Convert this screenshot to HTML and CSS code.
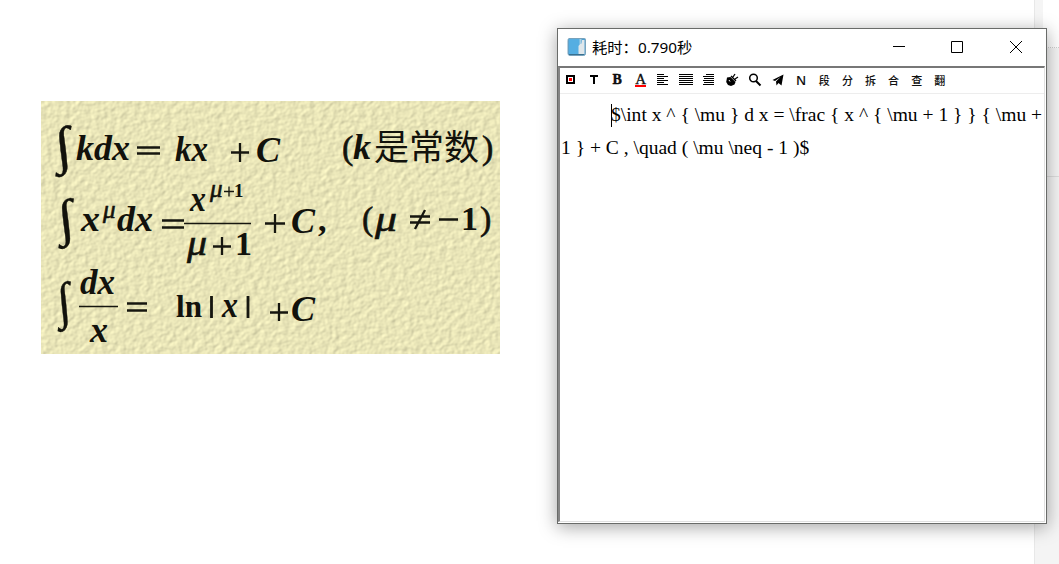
FILE: index.html
```html
<!DOCTYPE html>
<html lang="zh">
<head>
<meta charset="utf-8">
<title>耗时</title>
<link rel="stylesheet" href="styles.css">
</head>
<body>
<main class="desktop">
  <div class="side"><div class="side-top"></div><div class="side-mid"></div><div class="side-low"></div></div>

  <svg class="formula" viewBox="41 101 459 253">
    <defs>
      <filter id="paper" x="0" y="0" width="100%" height="100%" color-interpolation-filters="sRGB">
        <feTurbulence type="fractalNoise" baseFrequency="0.16 0.18" numOctaves="2" seed="8"/>
        <feColorMatrix values="0 0 0 0 0  0 0 0 0 0  0 0 0 0 0  1 0 0 0 0" result="h"/>
        <feDiffuseLighting in="h" surfaceScale="0.55" diffuseConstant="1.14" lighting-color="#ece8ba">
          <feDistantLight azimuth="215" elevation="60"/>
        </feDiffuseLighting>
      </filter>
    </defs>
    <rect class="paper" x="41" y="101" width="459" height="253" filter="url(#paper)"/>
    <g class="integral">
      <text transform="translate(57 163) skewX(7) scale(1.45 1.32)">∫</text>
      <text transform="translate(60 235) skewX(7) scale(1.4 1.3)">∫</text>
      <text transform="translate(59 318) skewX(6) scale(1.2 1.3)">∫</text>
    </g>
    <g class="var">
      <text x="76" y="160" textLength="54" lengthAdjust="spacingAndGlyphs">kdx</text>
      <text x="175" y="161" textLength="33" lengthAdjust="spacingAndGlyphs">kx</text>
      <text x="256" y="162">C</text>
      <text x="353" y="159">k</text>
      <text x="81" y="231" textLength="19" lengthAdjust="spacingAndGlyphs">x</text>
      <text class="mu small" x="103" y="218">μ</text>
      <text x="117" y="231" textLength="36" lengthAdjust="spacingAndGlyphs">dx</text>
      <text x="190" y="211" textLength="16" lengthAdjust="spacingAndGlyphs">x</text>
      <text class="mu small" x="210" y="197">μ</text>
      <text class="mu" x="187" y="255" textLength="20" lengthAdjust="spacingAndGlyphs">μ</text>
      <text x="291" y="233">C</text>
      <text class="mu" x="375" y="231" textLength="22" lengthAdjust="spacingAndGlyphs">μ</text>
      <text x="80" y="294" textLength="35" lengthAdjust="spacingAndGlyphs">dx</text>
      <text x="90" y="342">x</text>
      <text x="222" y="317" textLength="16" lengthAdjust="spacingAndGlyphs">x</text>
      <text x="291" y="321">C</text>
    </g>
    <g class="num">
      <text class="paren" x="342" y="159">(</text>
      <text class="paren" x="482" y="159">)</text>
      <text class="tiny" x="234" y="197">1</text>
      <text x="235" y="255">1</text>
      <text x="318" y="231">,</text>
      <text class="paren" x="362" y="230">(</text>
      <text x="461" y="230">1</text>
      <text class="paren" x="480" y="230">)</text>
      <text class="ln" x="176" y="317" textLength="26" lengthAdjust="spacingAndGlyphs">ln</text>
    </g>
    <text class="cjk" x="374" y="160">是常数</text>
    <g class="ops">
      <path d="M137 147.500h23M137 153.500h23M231 152.500h18M240 143v19"/>
      <path d="M162 220.500h22M162 227.500h22M265 223.500h20M275 214v19M213 246.500h18M222 237v18M410 216.500h20M410 222.500h20M425 210l-10 19M439 219.500h19"/>
      <path d="M127 303.500h20M127 310.500h20M270 312.500h18M279 303v18"/>
      <path class="bar" d="M211.500 296v22M248 296v22"/>
      <path class="fine" d="M224 191.500h10M229 186.500v10M184 223.500h67M79 306.500h39"/>
    </g>
  </svg>

  <section class="window">
    <header class="titlebar">
      <svg class="app" viewBox="0 0 20 20">
        <path d="M2 1.500h15.500q1 0 1 1v14q0 2-2 2H3q-2 0-2-2v-13q0-2 1-2z" fill="#4f9fd0" stroke="#78a2bc"/>
        <path d="M2 2h11v10l-2 5H2z" fill="#55aee2"/>
        <path d="M13 7q2 0 2-4h2.500v14h-6V9z" fill="#e0e7eb"/>
        <path d="M13.500 2v5" stroke="#a6cee4" stroke-width="2"/>
        <path d="M2 17.500h15" stroke="#39708f"/>
      </svg>
      <h1 class="title">耗时：0.790秒</h1>
      <svg class="controls" viewBox="0 0 130 14" fill="none" stroke="#000">
        <path d="M0 6.500h12M58.500 1.500h11v11h-11zM117 1l12 12M129 1l-12 12"/>
      </svg>
    </header>
    <div class="client">
      <nav class="toolbar">
        <svg viewBox="0 0 14 14"><path d="M3 3h7v7H3z" fill="#fff" stroke="#000" stroke-width="2"/><path d="M5 5h3v3H5z" fill="red"/></svg>
        <svg viewBox="0 0 14 14"><path d="M3 2h8v2H8v7H6V4H3z"/></svg>
        <span class="bold">B</span>
        <span class="color">A</span>
        <svg class="lines" viewBox="0 0 14 14"><path d="M1 1.500h7M1 3.500h11M1 5.500h7M1 7.500h11M1 9.500h7M1 11.500h11"/></svg>
        <svg class="lines" viewBox="0 0 14 14"><path d="M0 1.500h14M0 3.500h14M0 5.500h14M0 7.500h14M0 9.500h14M0 11.500h14"/></svg>
        <svg class="lines" viewBox="0 0 14 14"><path d="M4 1.500h8M1 3.500h11M2 5.500h10M1 7.500h11M2 9.500h10M1 11.500h11"/></svg>
        <svg viewBox="0 0 14 14"><path d="M2 4.500l3.500-.5 5 5-1 2.500-3.500 1.500-3-1-1.800-3z"/><path d="M6 3l5 5M8 4l2-3M10 6l3-2" fill="none" stroke="#000" stroke-width="1.300"/><path d="M4 7l1 1.500" stroke="#fff"/></svg>
        <svg viewBox="0 0 14 14"><circle cx="5.500" cy="5" r="3.800" fill="none" stroke="#000" stroke-width="1.500"/><path d="M8 8l4.500 4.500" stroke="#000" stroke-width="2"/></svg>
        <svg viewBox="0 0 14 14"><path d="M1.500 7L12.500 1.500l-2 11-3-2.500-2 2.500-.5-4 4.500-4.500-5.500 4z"/></svg>
        <span class="n">N</span>
        <span>段</span><span>分</span><span>拆</span><span>合</span><span>查</span><span>翻</span>
      </nav>
      <p class="editor"><i class="caret"></i><span class="line first">$\int x ^ { \mu } d x = \frac { x ^ { \mu + 1 } } { \mu +</span><br><span class="line">1 } + C , \quad ( \mu \neq - 1 )$</span></p>
    </div>
  </section>
</main>
</body>
</html>
```
FILE: styles.css
```css
* { box-sizing: border-box; }
body { margin: 0; background: #fff; overflow: hidden; }
.desktop { position: relative; width: 1059px; height: 564px; }

.side { position: absolute; right: 0; top: 0; width: 25px; height: 564px; display: flex; flex-direction: column; border-left: 1px solid #e8e8e8; }
.side-top { height: 48px; border-left: 8px solid #f5f5f5; border-bottom: 1px dotted #d0d0d0; }
.side-mid { height: 129px; background: #f5f5f5; border-bottom: 1px solid #dedede; }
.side-low { flex: 1; background: #f4f4f4; }

.formula { position: absolute; left: 41px; top: 101px; width: 459px; height: 253px; }
.formula text { font-family: "Liberation Serif", serif; font-size: 36px; font-weight: bold; fill: #12120c; }
.formula .paper { fill: #e9e6b5; }
.formula .var text { font-style: italic; }
.formula .integral text { font-weight: normal; font-size: 40px; stroke: #12120c; stroke-width: .3; }
.formula .var .mu { font-weight: normal; stroke: #12120c; stroke-width: .6; }
.formula .var .small { font-size: 25px; }
.formula .num text { font-size: 34px; }
.formula .num .paren { font-weight: normal; stroke: #12120c; stroke-width: .6; }
.formula .num .tiny { font-size: 19px; }
.formula .num .ln { font-size: 31px; }
.formula .cjk { font-family: "Noto Sans CJK SC", sans-serif; font-weight: 400; font-size: 35px; }
.ops path { fill: none; stroke: #16160f; stroke-width: 2.3; }
.ops .bar { stroke-width: 2.8; }
.ops .fine { stroke-width: 1.3; }

.window { position: absolute; left: 557px; top: 28px; width: 490px; height: 496px; display: flex; flex-direction: column; border: 1px solid #696b69; background: #fff; box-shadow: 0 3px 17px rgba(0, 0, 0, .36); }
.titlebar { height: 37px; display: flex; align-items: center; padding: 0 23px 1px 9px; }
.app { width: 20px; height: 20px; }
.title { flex: 1; margin: 0 0 1px 5px; font: 15.3px/20px "Noto Sans", "Noto Sans CJK SC", sans-serif; color: #000; }
.controls { width: 130px; height: 14px; }
.client { flex: 1; border: 2px solid #858585; border-top-color: #777; border-right: 1px solid #e0e0e0; border-bottom: 1px solid #e0e0e0; margin: 0 1px 1px 0; }
.toolbar { height: 26px; display: flex; align-items: center; gap: 9px; padding: 0 0 1px 4px; border-bottom: 1px solid #ededed; }
.toolbar svg, .toolbar span { width: 14px; height: 14px; flex: none; text-align: center; }
.toolbar span { margin-left: .1px; font: 500 11px/14px "Noto Sans CJK SC", sans-serif; color: #111; }
.toolbar .bold { font: bold 14px/14px "Liberation Serif", serif; -webkit-text-stroke: .4px #000; }
.toolbar .color { font: 15px/12px "Liberation Serif", serif; border-bottom: 2px solid red; width: 11px; margin: 0 1px 0 2px; -webkit-text-stroke: .3px #000; }
.toolbar .n { font: 600 13px/14px "Open Sans", sans-serif; }
.lines path { fill: none; stroke: #000; }
.editor { position: relative; margin: 0; padding: 4px 0 0 1px; font: 19.55px/33px "Liberation Serif", serif; color: #000; white-space: nowrap; }
.line { display: inline-block; }
.first { margin-left: 50px; }
.caret { position: absolute; left: 51px; top: 10px; width: 1px; height: 23px; background: #000; }
```
